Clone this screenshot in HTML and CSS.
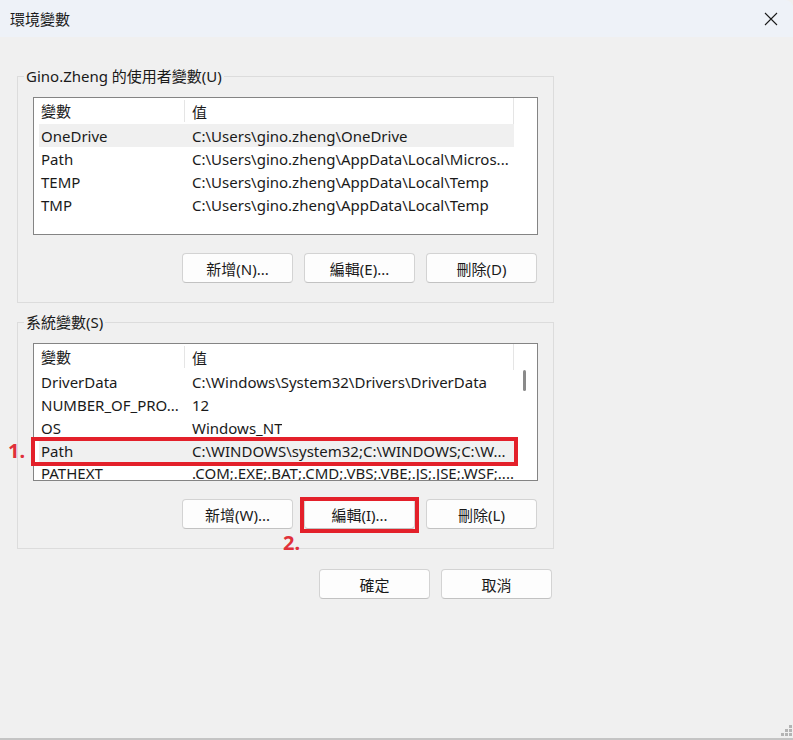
FILE: index.html
```html
<!DOCTYPE html>
<html>
<head>
	<meta charset="utf-8">
	<title>環境變數</title>
	<link rel="stylesheet" href="styles.css">
</head>
<body>
	<div id="ventana">
		<div class="titulo">
			<span class="titulo-texto">環境變數</span>
			<svg class="cerrar" width="14" height="14" viewBox="0 0 14 14">
				<path d="M1 1 L13 13 M13 1 L1 13" stroke="#1b1b1b" stroke-width="1.1" fill="none"/>
			</svg>
		</div>

		<div class="contenido">
			<fieldset class="grupo">
				<legend>Gino.Zheng 的使用者變數(U)</legend>
				<div class="lista">
					<div class="cabecera">
						<div class="col1">變數</div>
						<div class="col2">值</div>
					</div>
					<div class="fila sel"><div class="col1">OneDrive</div><div class="col2">C:\Users\gino.zheng\OneDrive</div></div>
					<div class="fila"><div class="col1">Path</div><div class="col2">C:\Users\gino.zheng\AppData\Local\Micros...</div></div>
					<div class="fila"><div class="col1">TEMP</div><div class="col2">C:\Users\gino.zheng\AppData\Local\Temp</div></div>
					<div class="fila"><div class="col1">TMP</div><div class="col2">C:\Users\gino.zheng\AppData\Local\Temp</div></div>
				</div>
				<div class="botones">
					<button class="boton">新增(N)...</button>
					<button class="boton">編輯(E)...</button>
					<button class="boton">刪除(D)</button>
				</div>
			</fieldset>

			<fieldset class="grupo">
				<legend>系統變數(S)</legend>
				<div class="lista">
					<div class="cabecera">
						<div class="col1">變數</div>
						<div class="col2">值</div>
					</div>
					<div class="fila"><div class="col1">DriverData</div><div class="col2">C:\Windows\System32\Drivers\DriverData</div></div>
					<div class="fila"><div class="col1">NUMBER_OF_PRO...</div><div class="col2">12</div></div>
					<div class="fila"><div class="col1">OS</div><div class="col2">Windows_NT</div></div>
					<div class="fila sel"><div class="col1">Path</div><div class="col2">C:\WINDOWS\system32;C:\WINDOWS;C:\W...</div></div>
					<div class="fila corta"><div class="col1">PATHEXT</div><div class="col2">.COM;.EXE;.BAT;.CMD;.VBS;.VBE;.JS;.JSE;.WSF;....</div></div>
					<div class="barra"></div>
				</div>
				<div class="botones">
					<button class="boton">新增(W)...</button>
					<button class="boton">編輯(I)...</button>
					<button class="boton">刪除(L)</button>
				</div>
			</fieldset>

			<div class="botones final">
				<button class="boton">確定</button>
				<button class="boton">取消</button>
			</div>
		</div>

		<!-- marcas rojas de los pasos -->
		<div class="marca marca1"></div>
		<div class="paso paso1">1.</div>
		<div class="marca marca2"></div>
		<div class="paso paso2">2.</div>

		<svg class="agarre" width="14" height="14" viewBox="0 0 14 14">
			<rect x="10" y="1" width="3" height="3" fill="#b4b4b4"/>
			<rect x="6" y="5" width="3" height="3" fill="#b4b4b4"/>
			<rect x="10" y="5" width="3" height="3" fill="#b4b4b4"/>
			<rect x="2" y="9" width="3" height="3" fill="#b4b4b4"/>
			<rect x="6" y="9" width="3" height="3" fill="#b4b4b4"/>
			<rect x="10" y="9" width="3" height="3" fill="#b4b4b4"/>
		</svg>
	</div>
</body>
</html>
```

FILE: styles.css
```css
*{box-sizing: border-box;}
body{
	margin: 0;
	font-family: "Noto Sans", "Noto Sans CJK TC", sans-serif;
	font-size: 15px;
	color: #1a1a1a;
	background: #f0f0f0;
}
#ventana{
	position: relative;
	width: 793px;
	height: 740px;
	background: #f0f0f0;
	border-top-right-radius: 8px;
	border-bottom: 2px solid #c4c4c4;
	overflow: hidden;
}
.titulo{
	height: 37px;
	background: #eef2f8;
	display: flex;
	align-items: center;
	justify-content: space-between;
	padding: 0 15px 0 10px;
}
.titulo-texto{ font-size: 15px; }
.cerrar{ margin-top: 1px; }

.contenido{
	padding: 30px 0 0 17px;
	width: 553px;
}
.grupo{
	margin: 0;
	width: 536px;
	border: 1px solid #dcdcdc;
	padding: 12px 15px 19px 15px;
}
.grupo + .grupo{ margin-top: 10px; }
legend{
	padding: 0 2px;
	margin-left: -9px;
	line-height: 18px;
}

.lista{
	position: relative;
	width: 505px;
	height: 138px;
	background: #fff;
	border: 1px solid #848484;
	padding: 0 0 0 5px;
	overflow: hidden;
}
.cabecera, .fila{
	display: flex;
	width: 475px;
	white-space: nowrap;
}
.cabecera{
	height: 26px;
	align-items: center;
	border-right: 1px solid #e5e5e5;
}
.fila{
	height: 23px;
	align-items: center;
	line-height: 20px;
}
/* la ultima fila queda cortada por el borde de la lista */
.corta{ align-items: flex-start; padding-top: 1px; }
.sel{ background: #f0f0f0; }
.col1{
	width: 146px;
	padding-left: 2px;
	overflow: hidden;
}
.cabecera .col1{
	border-right: 1px solid #e5e5e5;
	height: 22px;
	line-height: 22px;
}
.col2{
	padding-left: 7px;
	overflow: hidden;
}
.barra{
	position: absolute;
	left: 489px;
	top: 26px;
	width: 3px;
	height: 21px;
	border-radius: 2px;
	background: #8a8a8a;
}

.botones{
	display: flex;
	justify-content: flex-end;
	gap: 11px;
	margin-top: 18px;
	padding-right: 1px;
}
.boton{
	width: 111px;
	height: 30px;
	font-family: inherit;
	font-size: 15px;
	color: #1a1a1a;
	background: #fdfdfd;
	border: 1px solid #d3d3d3;
	border-bottom-color: #c2c2c2;
	border-radius: 4px;
	padding: 0;
}
.final{
	margin-top: 20px;
	padding-right: 1px;
}

.marca{
	position: absolute;
	border: 4px solid #e3202a;
}
.marca1{ left: 31px; top: 437px; width: 487px; height: 29px; }
.marca2{ left: 300px; top: 497px; width: 119px; height: 36px; }
.paso{
	position: absolute;
	color: #e0303a;
	font-weight: bold;
	font-size: 20px;
	line-height: 20px;
}
.paso1{ left: 8px; top: 441px; }
.paso2{ left: 283px; top: 533px; }
.agarre{
	position: absolute;
	right: 0;
	bottom: 0;
}
```
